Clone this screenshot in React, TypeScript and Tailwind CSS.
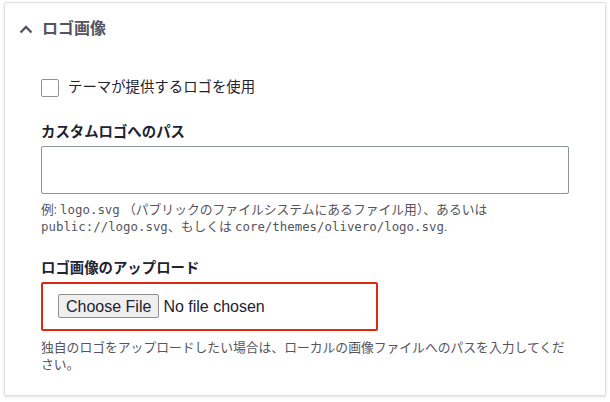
import React from 'react';

const jp = '"Roboto", "Noto Sans CJK JP", sans-serif';
const mono = '"DejaVu Sans Mono", "Noto Sans CJK JP", monospace';

function Chevron() {
  return (
    <svg width="14" height="14" viewBox="0 0 14 14" fill="none" className="block">
      <path d="M1.5 10.5 L7 5 L12.5 10.5" stroke="#545560" strokeWidth="2.4" strokeLinecap="butt" />
    </svg>
  );
}

export default function App() {
  return (
    <div className="w-[610px] h-[402px] bg-white pl-[4px] pt-[2px]" style={{ fontFamily: jp }}>
      <div className="w-[602px] h-[394px] bg-white border border-[#dedfe4] rounded-[2px] shadow-[0_1px_3px_rgba(0,0,0,0.12)]">
        {/* summary */}
        <div className="flex items-center h-[49px] pl-[14px] pt-[2px]">
          <Chevron />
          <span className="ml-[9px] text-[16px] font-bold text-[#545560] leading-[24px]">ロゴ画像</span>
        </div>

        <div className="pl-[36px] pt-[26px]">
          {/* checkbox */}
          <label className="flex items-center h-[20px]">
            <span className="w-[18px] h-[18px] border border-[#8e929c] rounded-[2px] bg-white" />
            <span className="ml-[9px] text-[14.4px] text-[#222330] leading-[20px]">テーマが提供するロゴを使用</span>
          </label>

          {/* path */}
          <div className="mt-[25px] text-[14.4px] font-bold text-[#222330] leading-[20px]">カスタムロゴへのパス</div>
          <div className="mt-[3px] w-[528px] h-[48px] border border-[#8e929c] rounded-[2px] bg-white" />
          <div className="mt-[6px] text-[12.8px] text-[#545560] leading-[17px] whitespace-nowrap">
            例: <span style={{ fontFamily: mono }} className="text-[12.4px]">logo.svg</span> <span style={{ fontFamily: '"Noto Sans CJK JP", sans-serif' }}>（パブリックのファイルシステムにあるファイル用）、あるいは</span>
            <br />
            <span style={{ fontFamily: mono }} className="text-[12.4px]">public://logo.svg</span>、もしくは{' '}
            <span style={{ fontFamily: mono }} className="text-[12.4px]">core/themes/olivero/logo.svg</span>.
          </div>

          {/* upload */}
          <div className="mt-[24px] text-[14.4px] font-bold text-[#222330] leading-[20px]">ロゴ画像のアップロード</div>
          <div className="mt-[3px] w-[337px] h-[49px] border-2 border-[#dc2a12] rounded-[2px] flex items-center pl-[15px]">
            <input
              type="file"
              className="text-[16px] text-[#222330] [&::file-selector-button]:text-[16px] [&::file-selector-button]:font-[inherit] [&::file-selector-button]:text-[#222330] [&::file-selector-button]:mr-[4px] [&::file-selector-button]:px-[7px] [&::file-selector-button]:h-[24px] [&::file-selector-button]:bg-[#efefef] [&::file-selector-button]:border [&::file-selector-button]:border-[#8f8f8f] [&::file-selector-button]:rounded-[2px]"
              style={{ fontFamily: '"Liberation Sans", Arial, sans-serif' }}
            />
          </div>
          <div className="mt-[8px] text-[12.8px] text-[#545560] leading-[17px] whitespace-nowrap">
            独自のロゴをアップロードしたい場合は、ローカルの画像ファイルへのパスを入力してくだ
            <br />
            さい。
          </div>
        </div>
      </div>
    </div>
  );
}
